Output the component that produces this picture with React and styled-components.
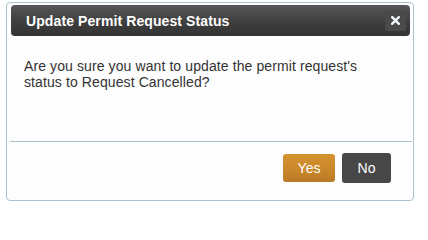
import React from 'react';
import styled, { createGlobalStyle } from 'styled-components';

const GlobalStyle = createGlobalStyle`
  html, body {
    margin: 0;
    padding: 0;
    background: #ffffff;
    font-family: Arial, "Liberation Sans", Helvetica, sans-serif;
  }
`;

const Page = styled.div`
  padding: 2px 0 0 6px;
`;

const Dialog = styled.div`
  box-sizing: border-box;
  width: 408px;
  height: 199px;
  display: flex;
  flex-direction: column;
  padding: 2px 3px 0 4px;
  border: 1px solid #a9c3cf;
  border-radius: 4px;
  background: #fdfdfd;
`;

const Header = styled.div`
  display: flex;
  align-items: center;
  justify-content: space-between;
  height: 31px;
  padding: 0 4px 0 15px;
  border-radius: 4px;
  background: linear-gradient(to bottom, #565656 0%, #3d3d3d 60%, #333333 100%);
`;

const Title = styled.span`
  color: #ffffff;
  font-size: 14px;
  font-weight: bold;
  letter-spacing: 0.1px;
`;

const CloseButton = styled.button`
  box-sizing: border-box;
  width: 21px;
  height: 21px;
  padding: 0;
  border: none;
  border-radius: 3px;
  background: #4a4a4a;
  display: flex;
  align-items: center;
  justify-content: center;
  cursor: pointer;
`;

const Content = styled.div`
  padding: 22px 13px 0 13px;
  height: 83px;
  color: #333333;
  font-size: 14px;
  line-height: 16px;
  letter-spacing: 0.1px;
`;

const Footer = styled.div`
  display: flex;
  justify-content: flex-end;
  align-items: center;
  gap: 7px;
  margin: 0 -2px 0 -1px;
  padding: 11px 21px 0 0;
  border-top: 1px solid #a9c3cf;
`;

const Button = styled.button`
  box-sizing: border-box;
  height: ${props => (props.variant === 'primary' ? '28px' : '30px')};
  width: ${props => (props.variant === 'primary' ? '52px' : '49px')};
  padding: 0;
  border: none;
  border-radius: 3px;
  color: #ffffff;
  font-family: Arial, "Liberation Sans", sans-serif;
  font-size: 14px;
  background: ${props =>
    props.variant === 'primary'
      ? 'linear-gradient(to bottom, #d4922f 0%, #c8862a 60%, #b87a24 100%)'
      : '#474747'};
  cursor: pointer;
`;

const CloseIcon = () => (
  <svg width="9" height="9" viewBox="0 0 9 9">
    <path d="M1.2 1.2 L7.8 7.8 M7.8 1.2 L1.2 7.8" stroke="#eef6f8" strokeWidth="2.4" strokeLinecap="square" />
  </svg>
);

export default function App() {
  return (
    <>
      <GlobalStyle />
      <Page>
        <Dialog>
          <Header>
            <Title>Update Permit Request Status</Title>
            <CloseButton aria-label="Close">
              <CloseIcon />
            </CloseButton>
          </Header>
          <Content>
            Are you sure you want to update the permit request's
            <br />
            status to Request Cancelled?
          </Content>
          <Footer>
            <Button variant="primary">Yes</Button>
            <Button>No</Button>
          </Footer>
        </Dialog>
      </Page>
    </>
  );
}
